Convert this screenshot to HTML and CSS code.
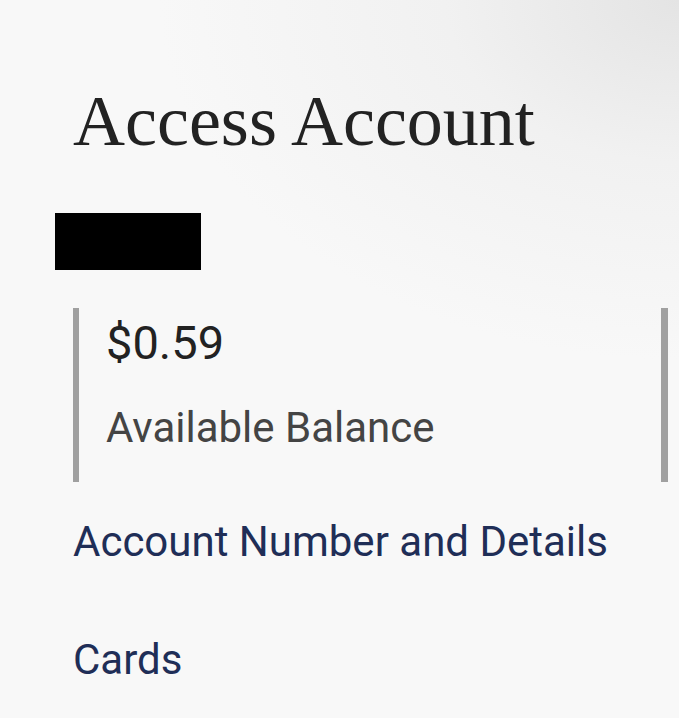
FILE: index.html
```html
<!DOCTYPE html>
<html lang="en">
<head>
    <meta charset="UTF-8">
    <meta name="viewport" content="width=device-width, initial-scale=1.0">
    <title>Access Account</title>
    <link rel="stylesheet" href="styles.css">
</head>
<body>

<div class="page">
    <h1 class="title">Access Account</h1>
    <div class="redacted"></div>

    <div class="balance">
        <div class="amount">$0.59</div>
        <div class="label">Available Balance</div>
    </div>

    <nav class="links">
        <a href="#">Account Number and Details</a>
        <a href="#">Cards</a>
    </nav>
</div>

</body>
</html>
```

FILE: styles.css
```css
body {
    margin: 0;
    min-height: 718px;
    font-family: Roboto, "Liberation Sans", sans-serif;
    background-color: #f8f8f8;
    background-image: radial-gradient(ellipse 520px 360px at 100% 0%, #e4e4e4 0%, #f1f1f1 45%, rgba(248, 248, 248, 0) 100%);
    overflow: hidden;
}

.page {
    display: flex;
    flex-direction: column;
    align-items: flex-start;
    padding: 79px 11px 0 73px;
}

.title {
    margin: 0;
    font-family: "Liberation Serif", serif;
    font-weight: normal;
    font-size: 72px;
    line-height: 85px;
    color: #222;
}

.redacted {
    width: 146px;
    height: 57px;
    margin: 49px 0 0 -18px;
    background: #000;
}

.balance {
    align-self: stretch;
    margin-top: 38px;
    padding: 8px 0 20px 27px;
    height: 146px;
    border-left: 6px solid #a0a0a0;
    border-right: 7px solid #a0a0a0;
}

.amount {
    font-size: 47px;
    line-height: 54px;
    color: #222;
}

.label {
    margin-top: 34px;
    font-size: 42px;
    line-height: 48px;
    color: #444;
}

.links {
    display: flex;
    flex-direction: column;
    gap: 68px;
    margin-top: 35px;
}

.links a {
    font-size: 42px;
    line-height: 50px;
    color: #1f2e57;
    text-decoration: none;
}
```
